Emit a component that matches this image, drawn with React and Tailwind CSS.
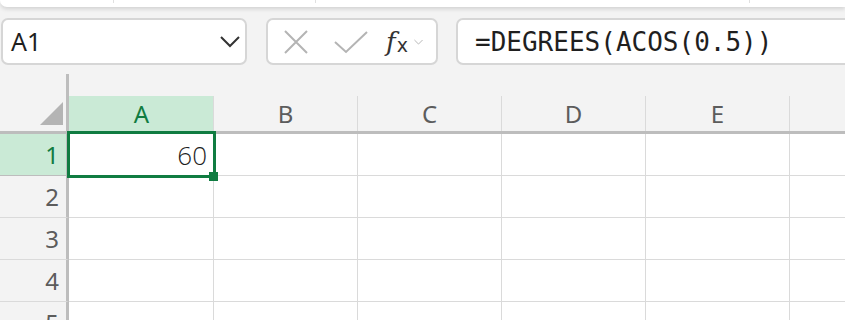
import { useState } from "react"

const COLS = ["A", "B", "C", "D", "E"]
const ROWS = [1, 2, 3, 4, 5]

const uiFont = { fontFamily: '"Noto Sans", "Open Sans", sans-serif' }

function XIcon() {
  return (
    <svg width="26" height="26" viewBox="0 0 26 26" fill="none">
      <path d="M2 2 L24 24 M24 2 L2 24" stroke="#b4b4b4" strokeWidth="2" />
    </svg>
  )
}

function CheckIcon() {
  return (
    <svg width="34" height="24" viewBox="0 0 34 24" fill="none">
      <path d="M1 12 L12 22 L33 2" stroke="#b4b4b4" strokeWidth="2" />
    </svg>
  )
}

function Chevron({ size = 20, color = "#333", width = 2 }) {
  return (
    <svg width={size} height={size / 2 + 2} viewBox="0 0 20 12" fill="none">
      <path d="M1 1 L10 10 L19 1" stroke={color} strokeWidth={width} />
    </svg>
  )
}

export default function App() {
  const [value] = useState("60")

  return (
    <div className="relative h-[320px] w-[845px] overflow-hidden bg-[#f3f3f3]" style={uiFont}>
      {/* ribbon bottom edge */}
      <div className="relative h-[7px] rounded-bl-[8px] bg-white shadow-[0_2px_4px_rgba(0,0,0,0.14)]">
        <div className="absolute left-[113px] top-0 h-[3px] w-px bg-[#e0e0e0]" />
        <div className="absolute left-[315px] top-0 h-[3px] w-px bg-[#e0e0e0]" />
        <div className="absolute left-[749px] top-0 h-[3px] w-px bg-[#e0e0e0]" />
      </div>

      {/* formula bar */}
      <div className="mt-[11px] flex h-[47px] gap-[18px] pl-px">
        <div className="flex w-[246px] items-center justify-between rounded-[7px] border-2 border-[#d6d6d6] bg-white pl-[8px] pr-[5px]">
          <span className="text-[25px] leading-none text-[#1f1f1f]">A1</span>
          <Chevron />
        </div>
        <div className="ml-px flex w-[172px] items-center rounded-[7px] border-2 border-[#d6d6d6] bg-white pl-[15px]">
          <XIcon />
          <div className="ml-[25px]">
            <CheckIcon />
          </div>
          <div className="ml-[18px] flex items-end gap-[1px] leading-none text-[#333]">
            <span className="text-[26px] italic" style={{ fontFamily: '"DejaVu Serif", serif' }}>
              f
            </span>
            <span className="text-[19px]" style={{ fontFamily: '"DejaVu Sans", sans-serif' }}>
              x
            </span>
          </div>
          <div className="ml-[6px] mt-[2px]">
            <Chevron size={9} color="#b0b0b0" width={2} />
          </div>
        </div>
        <div className="-mr-[20px] flex flex-1 items-center rounded-[7px] border-2 border-[#d6d6d6] bg-white pl-[17px]">
          <span
            className="text-[26px] leading-none text-[#1f1f1f]"
            style={{ fontFamily: '"DejaVu Sans Mono", monospace' }}
          >
            =DEGREES(ACOS(0.5))
          </span>
        </div>
      </div>

      {/* sheet */}
      <div className="relative mt-[9px]">
        <div className="flex h-[22px]">
          <div className="w-[69px] border-r-[3px] border-[#bdbdbd]" />
        </div>

        {/* column header */}
        <div className="flex h-[38px] border-b-[3px] border-[#bdbdbd]">
          <div className="relative w-[69px] border-r-[3px] border-[#bdbdbd]">
            <svg className="absolute left-[40px] top-[6px]" width="23" height="23" viewBox="0 0 23 23">
              <path d="M23 0 L23 23 L0 23 Z" fill="#b4b4b4" />
            </svg>
          </div>
          {COLS.map((c, i) => (
            <div
              key={c}
              className={
                i === 0
                  ? "flex w-[145px] items-center justify-center border-r border-[#dadada] bg-[#caead6] pl-px text-[24px] text-[#107c41]"
                  : "flex w-[144px] items-center justify-center border-r border-[#dadada] text-[24px] text-[#5c5c5c]"
              }
            >
              {c}
            </div>
          ))}
          <div className="flex-1" />
        </div>

        {/* rows */}
        {ROWS.map((r) => (
          <div key={r} className="flex h-[42px]">
            <div
              className={
                r === 1
                  ? "flex w-[69px] items-center justify-end border-r-[3px] border-b border-[#bdbdbd] bg-[#caead6] pr-[7px] text-[24px] text-[#107c41]"
                  : "flex w-[69px] items-center justify-end border-r-[3px] border-b border-r-[#bdbdbd] border-b-[#dadada] pr-[7px] text-[24px] text-[#5c5c5c]"
              }
            >
              {r}
            </div>
            {COLS.map((c, i) => (
              <div
                key={c}
                className={
                  (i === 0 ? "w-[145px] " : "w-[144px] ") +
                  "flex items-center justify-end border-r border-b border-[#dadada] bg-white pr-[6px]"
                }
              >
                {r === 1 && c === "A" && (
                  <span
                    className="text-[26px] font-light leading-none text-[#1f1f1f]"
                    style={{ fontFamily: '"Open Sans", sans-serif' }}
                  >
                    {value}
                  </span>
                )}
              </div>
            ))}
            <div className="flex-1 border-b border-[#dadada] bg-white" />
          </div>
        ))}

        {/* active cell */}
        <div className="absolute left-[67px] top-[57px] h-[47px] w-[149px] border-[3px] border-[#107c41]" />
        <div className="absolute left-[209px] top-[98px] h-[9px] w-[9px] bg-[#107c41]" />
      </div>
    </div>
  )
}
